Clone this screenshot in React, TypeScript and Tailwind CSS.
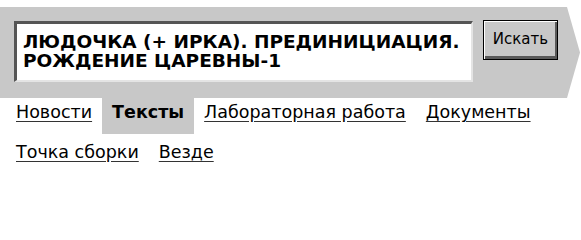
import type { ReactNode } from 'react'

const font = { fontFamily: '"DejaVu Sans", Verdana, sans-serif' }

function NavItem({ children, active = false }: { children: ReactNode; active?: boolean }) {
    return (
        <a
            href="#"
            className={
                active
                    ? 'px-[10px] pt-[5px] pb-[12px] leading-[19px] bg-[#c8c8c8] font-bold text-black no-underline'
                    : 'px-[10px] pt-[5px] pb-[12px] leading-[19px] text-black underline decoration-[#333] underline-offset-[3px]'
            }
        >
            {children}
        </a>
    )
}

export default function App() {
    return (
        <div className="w-[581px] h-[212px] bg-white text-black" style={font}>
            <div className="h-[7px]" />
            <div
                className="h-[91px] bg-[#c8c8c8] pl-[14px] pt-[14px] flex items-start"
                style={{ clipPath: 'polygon(0 0, 567px 0, 580px 50%, 567px 100%, 0 100%)' }}
            >
                <div className="w-[459px] h-[61px] bg-white border-[3px] border-t-[#555] border-l-[#555] border-b-[#e4e4e4] border-r-[#e4e4e4] border-b-2 border-r-2 pl-[6px] pt-[8px] text-[18.5px] font-bold leading-[19px] whitespace-nowrap">
                    ЛЮДОЧКА (+ ИРКА). ПРЕДИНИЦИАЦИЯ.
                    <br />
                    РОЖДЕНИЕ ЦАРЕВНЫ-1
                </div>
                <button
                    type="button"
                    className="ml-[10px] -mt-[1px] w-[75px] h-[40px] bg-[#c8c8c8] border border-black text-[15px] text-black shadow-[inset_1px_1px_0_#fff,inset_-2px_-3px_0_#5a5a5a] pb-[2px]"
                >
                    Искать
                </button>
            </div>
            <nav className="flex flex-wrap gap-y-[2px] pl-[6px] text-[17.5px]">
                <NavItem>Новости</NavItem>
                <NavItem active>Тексты</NavItem>
                <NavItem>Лабораторная работа</NavItem>
                <NavItem>Документы</NavItem>
                <div className="basis-full h-0" />
                <NavItem>Точка сборки</NavItem>
                <NavItem>Везде</NavItem>
            </nav>
        </div>
    )
}
